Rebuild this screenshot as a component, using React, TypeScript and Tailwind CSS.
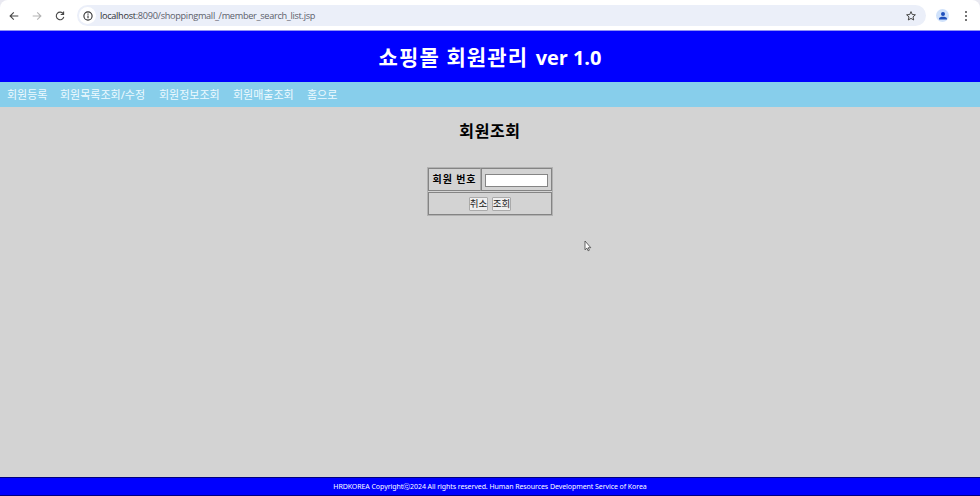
import type { ReactNode } from 'react';

const menu = [
  { label: '회원등록', cls: 'w-[53px]' },
  { label: '회원목록조회/수정', cls: 'w-[99px]' },
  { label: '회원정보조회', cls: 'w-[74px]' },
  { label: '회원매출조회', cls: 'w-[74px]' },
  { label: '홈으로', cls: 'w-[40px]' },
];

function Icon({ children, className = '' }: { children: ReactNode; className?: string }) {
  return (
    <svg
      viewBox="0 0 12 12"
      className={`h-3 w-3 shrink-0 ${className}`}
      fill="none"
      stroke="currentColor"
      strokeWidth="1.1"
    >
      {children}
    </svg>
  );
}

function BrowserBar() {
  return (
    <div className="h-[31px] shrink-0 border-b border-[#8f90f5] bg-[#e9e9f1]">
      <div className="flex h-[30px] items-center rounded-t-lg bg-white pt-px text-[#474747]">
        <Icon className="ml-2">
          <path d="M10.3 6H2.3M5.8 2.3L2.1 6l3.7 3.7" />
        </Icon>
        <Icon className="ml-[11px] text-[#b4b4b4]">
          <path d="M1.7 6h8M6.2 2.3L9.9 6 6.2 9.7" />
        </Icon>
        <Icon className="ml-[11px]">
          <path d="M9.3 3.9A3.8 3.8 0 1 0 9.8 6.8M9.6 1.6v2.9H6.7" />
        </Icon>
        <div className="ml-[11px] flex h-[21px] w-[849px] items-center rounded-full bg-[#ebeff9] pl-[2px]">
          <div className="flex h-[17px] w-[17px] items-center justify-center rounded-full bg-white text-[#303030]">
            <Icon>
              <circle cx="6" cy="6" r="4.1" />
              <path d="M6 5.4v2.8M6 3.6v1.1" />
            </Icon>
          </div>
          <span className="ml-[4px] w-[216px] whitespace-nowrap font-['Open_Sans',sans-serif] text-[9.2px] leading-[14px] tracking-[-0.31px] text-[#5b606b]">
            <span className="text-[#303238]">localhost</span>:8090/shoppingmall_/member_search_list.jsp
          </span>
          <Icon className="ml-auto mr-[9px]">
            <path d="M6 1.6l1.25 2.9 3.15.3-2.4 2.1.7 3.1L6 8.4 3.3 10 4 6.9 1.6 4.8l3.15-.3z" strokeWidth="1" />
          </Icon>
        </div>
        <div className="ml-[10px] flex h-[13px] w-[13px] items-center justify-center rounded-full bg-[#d0e2fb]">
          <svg viewBox="0 0 10 10" className="h-[10px] w-[10px]" fill="#1f50bd">
            <circle cx="5" cy="3" r="2" />
            <path d="M1 8.6V7.5C1 6.2 3.2 5.7 5 5.7s4 .5 4 1.8v1.1z" />
          </svg>
        </div>
        <svg viewBox="0 0 4 12" className="ml-[15px] h-3 w-1" fill="#474747">
          <circle cx="2" cy="2" r="1" />
          <circle cx="2" cy="6" r="1" />
          <circle cx="2" cy="10" r="1" />
        </svg>
      </div>
    </div>
  );
}

function FormButton({ children }: { children: ReactNode }) {
  return (
    <button className="flex h-[14px] w-[19px] items-center justify-center whitespace-nowrap rounded-[1px] border border-[#aaa] bg-[#efefef] text-[9.5px] leading-none text-[#222]">
      {children}
    </button>
  );
}

export default function App() {
  return (
    <div className="relative flex h-[496px] w-[980px] flex-col overflow-hidden bg-[#d3d3d3] font-['Noto_Sans','Noto_Sans_CJK_KR',sans-serif] text-black">
      <BrowserBar />
      <header className="flex h-[51px] shrink-0 items-center justify-center bg-[#0000ff] pt-px">
        <h1 className="whitespace-nowrap text-[21px] font-bold leading-none tracking-[1.1px] text-white">
          쇼핑몰 회원관리{' '}
          <span className="ml-px font-['Open_Sans',sans-serif] text-[20px] font-bold tracking-[-0.05px]">ver 1.0</span>
        </h1>
      </header>
      <nav className="flex h-[25px] shrink-0 items-center bg-[#87ceeb] pl-[7px] text-[11px] leading-none text-[#eefaff]">
        {menu.map((item) => (
          <a key={item.label} className={`shrink-0 whitespace-nowrap ${item.cls}`}>
            {item.label}
          </a>
        ))}
      </nav>
      <main className="flex flex-1 flex-col items-center">
        <h2 className="mt-[16px] h-4 whitespace-nowrap text-[16px] font-bold leading-4 tracking-[0.6px]">회원조회</h2>
        <div className="mt-[28px] flex h-[49px] w-[126px] flex-col gap-px border border-[#b2b2b2]">
          <div className="flex h-[23px]">
            <div className="flex w-[53px] items-center justify-center whitespace-nowrap border border-[#848484] border-r-[#aaa] pb-px text-[10px] font-bold leading-none tracking-[0.9px]">
              회원 번호
            </div>
            <div className="flex flex-1 items-center border border-[#848484] pl-[3px] pt-[2px]">
              <input className="h-[13px] w-[63px] border border-[#858585] bg-white" />
            </div>
          </div>
          <div className="flex h-[23px] items-center justify-center gap-[4px] border border-[#848484]">
            <FormButton>취소</FormButton>
            <FormButton>조회</FormButton>
          </div>
        </div>
      </main>
      <footer className="flex h-[19px] shrink-0 items-center justify-center border-y border-[#000080] bg-[#0000ff] pt-px text-[7px] leading-none tracking-[-0.07px] text-white">
        <span className="whitespace-nowrap">
          HRDKOREA Copyright<span className="font-['DejaVu_Sans',sans-serif]">ⓒ</span>2024 All rights reserved. Human Resources Development Service of Korea
        </span>
      </footer>
      <svg
        viewBox="0 0 8 12"
        className="absolute left-[584px] top-[240px] h-3 w-2"
        fill="white"
        stroke="#444"
        strokeWidth=".8"
      >
        <path d="M1 1v8.8l1.9-1.7 1.2 2.7 1.3-.6-1.2-2.5h2.6z" />
      </svg>
    </div>
  );
}
